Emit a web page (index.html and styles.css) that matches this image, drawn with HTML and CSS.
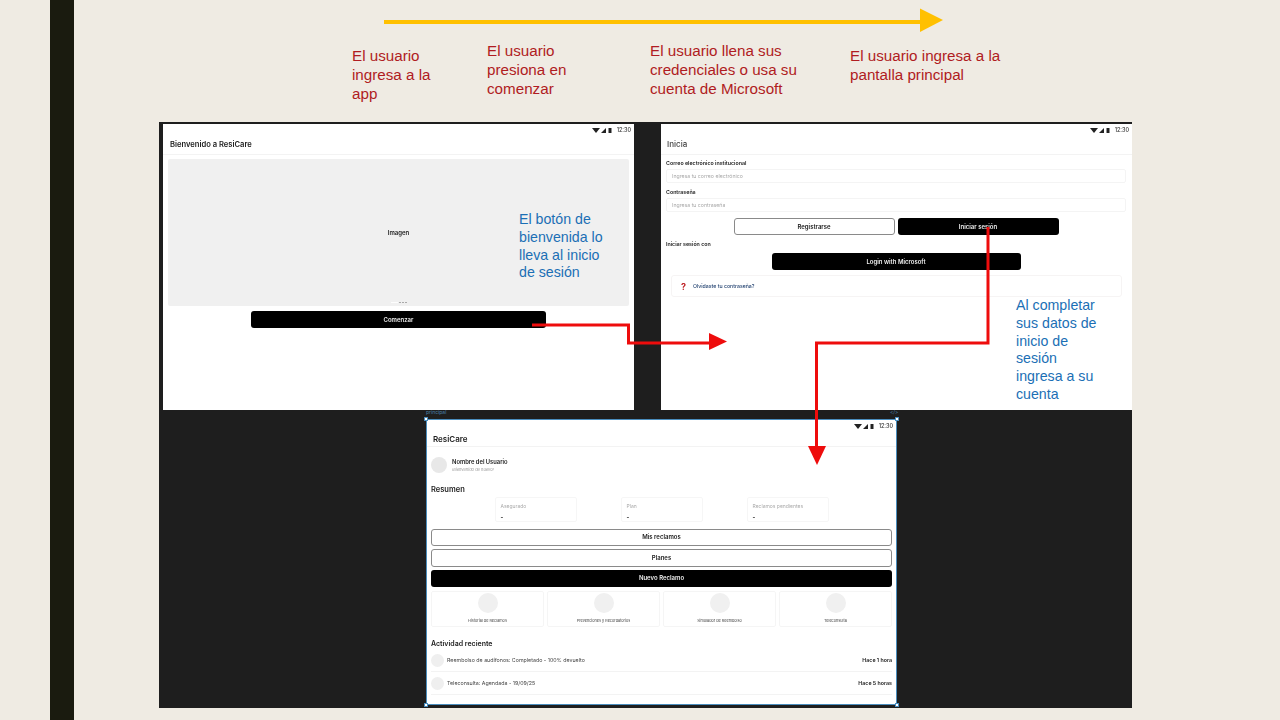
FILE: index.html
```html
<!DOCTYPE html>
<html lang="es">
<head>
    <meta charset="UTF-8">
    <meta name="viewport" content="width=device-width, initial-scale=1.0">
    <title>Flujo de inicio de ResiCare</title>
    <link rel="stylesheet" href="styles.css">
</head>
<body>
    <div class="slide">
        <div class="side-bar"></div>

        <p class="note note-red step-1">El usuario<br>ingresa a la<br>app</p>
        <p class="note note-red step-2">El usuario<br>presiona en<br>comenzar</p>
        <p class="note note-red step-3">El usuario llena sus<br>credenciales o usa su<br>cuenta de Microsoft</p>
        <p class="note note-red step-4">El usuario ingresa a la<br>pantalla principal</p>

        <div class="board">
            <!-- bienvenida -->
            <section class="screen screen-welcome">
                <div class="status">
                    <svg class="status-icons" viewBox="0 0 20 7"><path d="M0 1h8L4 6z"/><path d="M9 6l5-5v5z"/><path d="M16.500 1h3v5h-3z"/></svg>
                    <span>12:30</span>
                </div>
                <header class="app-header">Bienvenido a ResiCare</header>
                <div class="welcome-body">
                    <div class="hero">
                        <span>Imagen</span>
                        <div class="hero-dots"><i class="dot-on"></i><i></i><i></i><i></i></div>
                    </div>
                    <button class="btn btn-dark btn-start">Comenzar</button>
                </div>
            </section>

            <!-- inicio de sesion -->
            <section class="screen screen-login">
                <div class="status">
                    <svg class="status-icons" viewBox="0 0 20 7"><path d="M0 1h8L4 6z"/><path d="M9 6l5-5v5z"/><path d="M16.500 1h3v5h-3z"/></svg>
                    <span>12:30</span>
                </div>
                <header class="app-header header-login">Inicia</header>
                <div class="login-body">
                    <div class="field-label">Correo electrónico institucional</div>
                    <div class="field">Ingresa tu correo electrónico</div>
                    <div class="field-label label-next">Contraseña</div>
                    <div class="field">Ingresa tu contraseña</div>
                    <div class="login-actions">
                        <button class="btn btn-light">Registrarse</button>
                        <button class="btn btn-dark">Iniciar sesión</button>
                    </div>
                    <div class="field-label label-with">Iniciar sesión con</div>
                    <button class="btn btn-dark btn-microsoft">Login with Microsoft</button>
                    <div class="forgot"><b>?</b><span>Olvidaste tu contraseña?</span></div>
                </div>
            </section>

            <!-- pantalla principal -->
            <span class="frame-name">principal</span>
            <span class="frame-code">&lt;/&gt;</span>
            <section class="screen screen-home">
                <i class="handle handle-tl"></i><i class="handle handle-tr"></i>
                <i class="handle handle-bl"></i><i class="handle handle-br"></i>
                <div class="status">
                    <svg class="status-icons" viewBox="0 0 20 7"><path d="M0 1h8L4 6z"/><path d="M9 6l5-5v5z"/><path d="M16.500 1h3v5h-3z"/></svg>
                    <span>12:30</span>
                </div>
                <header class="app-header header-home">ResiCare</header>
                <div class="home-body">
                    <div class="profile">
                        <div class="avatar"></div>
                        <div>
                            <div class="profile-name">Nombre del Usuario</div>
                            <div class="profile-hello">¡Bienvenido de nuevo!</div>
                        </div>
                    </div>
                    <h2 class="section-title">Resumen</h2>
                    <div class="summary">
                        <div class="summary-card"><span>Asegurado</span><b>-</b></div>
                        <div class="summary-card"><span>Plan</span><b>-</b></div>
                        <div class="summary-card"><span>Reclamos pendientes</span><b>-</b></div>
                    </div>
                    <div class="home-actions">
                        <button class="btn btn-light">Mis reclamos</button>
                        <button class="btn btn-light">Planes</button>
                        <button class="btn btn-dark">Nuevo Reclamo</button>
                    </div>
                    <div class="tiles">
                        <div class="tile"><i></i><span>Historial de Reclamos</span></div>
                        <div class="tile"><i></i><span>Prevenciones y Recordatorios</span></div>
                        <div class="tile"><i></i><span>Simulador de Reembolso</span></div>
                        <div class="tile"><i></i><span>Teleconsulta</span></div>
                    </div>
                    <h2 class="section-title title-activity">Actividad reciente</h2>
                    <div class="activity"><i></i><span>Reembolso de audífonos: Completado - 100% devuelto</span><b>Hace 1 hora</b></div>
                    <div class="activity"><i></i><span>Teleconsulta: Agendada - 19/09/25</span><b>Hace 5 horas</b></div>
                </div>
            </section>
        </div>

        <p class="note note-blue note-button">El botón de<br>bienvenida lo<br>lleva al inicio<br>de sesión</p>
        <p class="note note-blue note-account">Al completar<br>sus datos de<br>inicio de<br>sesión<br>ingresa a su<br>cuenta</p>

        <svg class="arrows" viewBox="0 0 1280 720">
            <path class="line-yellow" d="M384 22H922"/>
            <path class="head-yellow" d="M920 8.500l23 11.500-23 12z"/>
            <path class="line-red" d="M532 325H628.500V343H710"/>
            <path class="head-red" d="M709 333l18 8.500-18 8.500z"/>
            <path class="line-red" d="M988 227V343H816.500V448"/>
            <path class="head-red" d="M808 446h18l-9 19z"/>
        </svg>
    </div>
</body>
</html>
```

FILE: styles.css
```css
* {
    box-sizing: border-box;
}
body {
    margin: 0;
    background-color: #efebe3;
    font-family: Inter, "Liberation Sans", sans-serif;
}
.slide {
    position: relative;
    width: 1280px;
    height: 720px;
    overflow: hidden;
    background-color: #efebe3;
}
.side-bar {
    position: absolute;
    left: 50px;
    top: 0;
    width: 24px;
    height: 720px;
    background-color: #1a1b0f;
}

/* notas de la diapositiva */
.note {
    position: absolute;
    margin: 0;
    font-family: "Liberation Sans", Arial, sans-serif;
    font-size: 15.200px;
    line-height: 19px;
}
.note-red {
    color: #b01c22;
}
.note-blue {
    color: #1b6fb5;
    font-size: 14.200px;
    line-height: 17.800px;
}
.step-1 { left: 352px; top: 46px; }
.step-2 { left: 487px; top: 41px; }
.step-3 { left: 650px; top: 41px; }
.step-4 { left: 850px; top: 46px; }
.note-button { left: 519px; top: 211px; }
.note-account { left: 1016px; top: 297px; }

.arrows {
    position: absolute;
    left: 0;
    top: 0;
    width: 1280px;
    height: 720px;
    pointer-events: none;
}
.line-yellow {
    fill: none;
    stroke: #ffc000;
    stroke-width: 4;
}
.head-yellow {
    fill: #ffc000;
}
.line-red {
    fill: none;
    stroke: #ee0c0c;
    stroke-width: 3;
}
.head-red {
    fill: #ee0c0c;
}

/* capturas */
.board {
    position: absolute;
    left: 159px;
    top: 122px;
    width: 973px;
    height: 586px;
    background-color: #1e1e1e;
}
.screen {
    position: absolute;
    display: flex;
    flex-direction: column;
    width: 471px;
    height: 286px;
    background: white;
    color: #1c1c1c;
}
.screen > *:not(.handle) {
    filter: blur(0.4px);
}
.screen-welcome { left: 4px; top: 2px; }
.screen-login { left: 502px; top: 2px; }
.screen-home {
    left: 267px;
    top: 297px;
    border: 1px solid #4a8dbd;
}
.frame-name {
    position: absolute;
    left: 267px;
    top: 287px;
    font-size: 5px;
    line-height: 7px;
    color: #4a7fa8;
}
.frame-code {
    position: absolute;
    left: 731px;
    top: 287px;
    font-size: 5px;
    line-height: 7px;
    color: #4a7fa8;
}
.handle {
    position: absolute;
    width: 4px;
    height: 4px;
    background: white;
    border: 1px solid #4a8dbd;
}
.handle-tl { left: -3px; top: -3px; }
.handle-tr { right: -3px; top: -3px; }
.handle-bl { left: -3px; bottom: -3px; }
.handle-br { right: -3px; bottom: -3px; }

.status {
    display: flex;
    justify-content: flex-end;
    align-items: center;
    gap: 5px;
    height: 12px;
    padding-right: 3px;
    font-size: 5.500px;
    font-weight: 500;
    color: #333;
}
.status-icons {
    width: 20px;
    height: 7px;
    fill: #222;
}
.app-header {
    height: 19px;
    padding: 0 0 2px 7px;
    display: flex;
    align-items: center;
    border-bottom: 1px solid #f3f3f3;
    font-size: 7.600px;
    font-weight: 600;
}
.header-login {
    padding-left: 6px;
    font-size: 8px;
    font-weight: 500;
    color: #444;
}
.header-home {
    height: 14.500px;
    padding: 0 0 0 6px;
    font-size: 8px;
}

.btn {
    display: block;
    padding: 0;
    border-radius: 3px;
    font-family: inherit;
    font-size: 6px;
    font-weight: 600;
    line-height: 1;
}
.btn-dark {
    background-color: #000;
    border: 0;
    color: #eee;
}
.btn-light {
    background-color: white;
    border: 1px solid #8a8a8a;
    color: #222;
}

/* bienvenida */
.welcome-body {
    display: flex;
    flex-direction: column;
    padding: 4px 5px 0;
}
.hero {
    position: relative;
    display: flex;
    justify-content: center;
    align-items: center;
    height: 147px;
    border-radius: 2px;
    background-color: #f0f0f0;
    font-size: 6px;
    font-weight: 600;
}
.hero-dots {
    position: absolute;
    bottom: 3px;
    left: 0;
    right: 0;
    display: flex;
    justify-content: center;
    gap: 1px;
}
.hero-dots i {
    width: 2px;
    height: 1.500px;
    background-color: #aaa;
}
.hero-dots .dot-on {
    width: 7px;
    background-color: #fdfdfd;
}
.btn-start {
    align-self: center;
    width: 295px;
    height: 17px;
    margin-top: 5px;
}

/* inicio de sesion */
.login-body {
    display: flex;
    flex-direction: column;
    padding: 4px 6px 0 5px;
}
.field-label {
    height: 8px;
    margin-bottom: 2px;
    font-size: 5.300px;
    font-weight: 600;
    line-height: 8px;
}
.label-next {
    margin-top: 5px;
}
.label-with {
    margin: 5px 0 5px;
}
.field {
    height: 14px;
    padding-left: 5px;
    border: 1px solid #f4f4f4;
    border-radius: 2px;
    font-size: 5.200px;
    line-height: 12px;
    color: #a8a8a8;
}
.login-actions {
    display: flex;
    justify-content: center;
    gap: 3px;
    margin-top: 6px;
}
.login-actions .btn {
    width: 161px;
    height: 17px;
}
.btn-microsoft {
    align-self: center;
    width: 249px;
    height: 17px;
}
.forgot {
    display: flex;
    align-items: center;
    height: 22px;
    margin: 5px 4px 0 5px;
    padding-left: 9px;
    border: 1px solid #f6f4f4;
    border-radius: 3px;
    font-size: 5.200px;
    font-weight: 500;
    color: #1f3f6e;
}
.forgot b {
    width: 12px;
    font-size: 9px;
    color: #c0262b;
}

/* pantalla principal */
.home-body {
    display: flex;
    flex-direction: column;
    padding: 0 4px;
}
.profile {
    display: flex;
    align-items: center;
    gap: 5px;
    height: 19px;
    margin-top: 9px;
}
.avatar {
    width: 16px;
    height: 16px;
    border-radius: 50%;
    background-color: #e8e8e8;
}
.profile-name {
    font-size: 5.800px;
    font-weight: 600;
    line-height: 9px;
}
.profile-hello {
    font-size: 4px;
    font-style: italic;
    line-height: 7px;
    color: #999;
}
.section-title {
    height: 10px;
    margin: 10px 0 0;
    font-size: 7.500px;
    font-weight: 600;
    line-height: 10px;
}
.summary {
    display: flex;
    justify-content: center;
    gap: 44px;
    margin-top: 2px;
}
.summary-card {
    display: flex;
    flex-direction: column;
    width: 82px;
    height: 25px;
    padding: 5px 0 0 5px;
    border: 1px solid #f6f6f6;
    border-radius: 2px;
}
.summary-card span {
    height: 11px;
    font-size: 5px;
    color: #aaa;
}
.summary-card b {
    font-size: 6px;
    line-height: 6px;
    font-weight: 700;
}
.home-actions {
    display: flex;
    flex-direction: column;
    gap: 3px;
    margin-top: 7px;
}
.home-actions .btn {
    height: 17.500px;
}
.tiles {
    display: grid;
    grid-template-columns: repeat(4, 1fr);
    gap: 3px;
    margin-top: 4px;
}
.tile {
    display: flex;
    flex-direction: column;
    align-items: center;
    height: 36px;
    padding-top: 1px;
    border: 1px solid #f5f5f5;
    border-radius: 2px;
    font-size: 3.800px;
    color: #444;
}
.tile i {
    width: 20px;
    height: 20px;
    margin-bottom: 5px;
    border-radius: 50%;
    background-color: #f0f0f0;
}
.title-activity {
    margin-top: 12px;
    font-size: 7px;
}
.activity {
    display: flex;
    align-items: center;
    height: 23px;
    border-bottom: 1px solid #f3f3f3;
    font-size: 5.300px;
    color: #444;
}
.activity i {
    width: 13px;
    height: 13px;
    margin-right: 3px;
    border-radius: 50%;
    background-color: #efefef;
}
.activity span {
    flex: 1;
}
.activity b {
    font-weight: 600;
    color: #222;
}
```
